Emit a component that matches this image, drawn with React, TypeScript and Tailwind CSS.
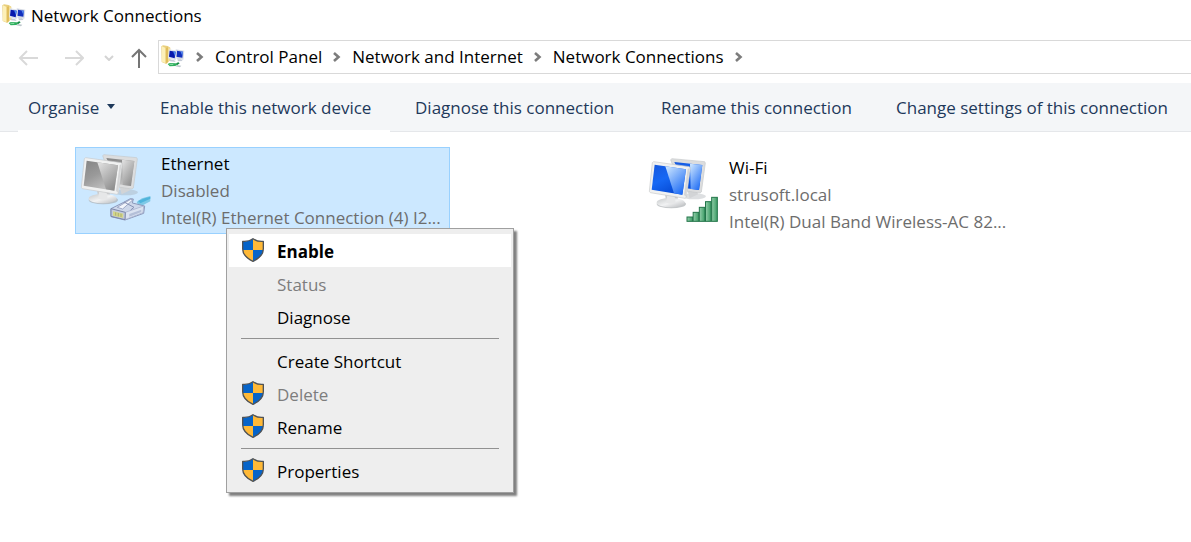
import { Fragment } from 'react'
import clsx from 'clsx'

type MenuEntry = { label: string; shield?: boolean; disabled?: boolean; isDefault?: boolean }

const BREADCRUMBS = ['Control Panel', 'Network and Internet', 'Network Connections']

const COMMANDS = [
    'Enable this network device',
    'Diagnose this connection',
    'Rename this connection',
    'Change settings of this connection',
]

const MENU_GROUPS: MenuEntry[][] = [
    [
        { label: 'Enable', shield: true, isDefault: true },
        { label: 'Status', disabled: true },
        { label: 'Diagnose' },
    ],
    [
        { label: 'Create Shortcut' },
        { label: 'Delete', shield: true, disabled: true },
        { label: 'Rename', shield: true },
    ],
    [{ label: 'Properties', shield: true }],
]

const FolderNetworkIcon = () => (
    <svg viewBox="0 0 72 72" className="size-6 shrink-0" aria-hidden="true">
        <path d="M1 4 6 1l14 2 8 5v36L16 57 2 51Z" fill="#e9cf7c" />
        <path d="M3 4 14 9v46L3 50Z" fill="#fdf0b8" />
        <path d="m14 9 7-2v45l-7 3Z" fill="#e0bd5c" />
        <path d="m21 7 6 2v37l-6 6Z" fill="#f3dc92" />
        <path d="m44 13 26 4-3 27-20-2Z" fill="#d5dae4" />
        <path d="m47 17 19 3-2 18-18-3Z" fill="#1230bd" />
        <path d="m58 19 8 1-2 12Z" fill="#5b8df0" />
        <path d="m24 13 24 4-4 29-23-6Z" fill="#dfe4ee" />
        <path d="m26 17 18 3-3 20-17-5Z" fill="#0719ad" />
        <path d="m36 19 8 1-2 14Z" fill="#4b8bf2" />
        <path d="m26 43 14 3 4 5-17-2Z" fill="#c6ccd8" />
        <path d="M49 43h11l5 5-14 1Z" fill="#c4cad6" />
        <path d="m20 57 6-3 18 1 6 4-7 4-17 1Z" fill="#2fae5e" />
        <path d="m24 56 14 1-3 3-9-1Z" fill="#8bdda5" />
        <path d="m45 55 7-3 4 3-7 5Z" fill="#128a40" />
        <path d="m47 60 14 2-4 5-14-3Z" fill="#bcc6cb" />
    </svg>
)

const ShieldIcon = () => (
    <svg viewBox="0 0 66 72" className="h-6 w-[22px]" aria-hidden="true">
        <path d="M33 2C25 8 12 11 2 10v22c0 17 14 30 31 38Z" fill="#0664c9" />
        <path d="M33 2c8 6 21 9 31 8v22c0 17-14 30-31 38Z" fill="#ffb937" />
        <path d="M33 36h31c-1 16-15 27-31 34Z" fill="#0664c9" />
        <path d="M33 36H2c1 16 15 27 31 34Z" fill="#ffb937" />
        <path
            d="M33 2C25 8 12 11 2 10v22c0 17 14 30 31 38 17-8 31-21 31-38V10C54 11 41 8 33 2Z"
            fill="none"
            stroke="#505356"
            strokeWidth="4"
            strokeLinejoin="round"
        />
    </svg>
)

const EthernetPlug = () => (
    <g strokeLinejoin="round">
        <path d="m170 150 16-11 25-7v16l-34 18Z" fill="#7fc9e6" />
        <path d="m174 147 20-8 17-5v6l-30 14Z" fill="#4fb4dc" />
        <path d="m93 170 36-18 22-12 9 1-3 12 37 9-3 22-56 20-42-10Z" fill="#cdd7ea" stroke="#8d99bb" strokeWidth="3" />
        <path d="m136 181 55-19-2 20-54 21Z" fill="#dbe3f1" stroke="#a0abc9" strokeWidth="2" />
        <path d="m93 170 43 11-1 22-42-10Z" fill="#c3cadb" stroke="#7b86a8" strokeWidth="3" />
        <path d="m99 178 31 7-1 13-30-7Z" fill="#d3d689" />
        <path d="M107 181v10m8-8v10m8-8v10" stroke="#9b9c68" strokeWidth="2" />
        <path d="m112 166 40-24 6 2-30 27Z" fill="#f3f6fc" stroke="#7f8bb0" strokeWidth="2" />
        <path d="m132 150 30 16-10 8" fill="none" stroke="#8792b5" strokeWidth="3" />
        <path d="m148 186 36-13v7l-36 14Z" fill="#b4bfd8" />
    </g>
)

const SignalBars = () => (
    <g stroke="#23754a" strokeWidth="3">
        {[183, 169, 154, 137, 124].map((top, i) => (
            <rect key={top} x={117 + i * 18.5} y={top} width="17" height={196 - top} fill="url(#bar)" />
        ))}
    </g>
)

const ComputersIcon = ({ enabled }: { enabled: boolean }) => {
    const id = enabled ? 'on' : 'off'
    return (
        <svg viewBox="0 0 216 216" className="size-[72px] shrink-0" aria-hidden="true">
            <defs>
                <linearGradient id={`screen-${id}`} x1="0" y1="0" x2="0.6" y2="1">
                    <stop offset="0" stopColor={enabled ? '#1557dd' : '#848484'} />
                    <stop offset="0.5" stopColor={enabled ? '#1668f4' : '#9a9a9a'} />
                    <stop offset="1" stopColor={enabled ? '#0548d2' : '#c4c4c4'} />
                </linearGradient>
                <linearGradient id={`glare-${id}`} x1="0" y1="0" x2="0.7" y2="1">
                    <stop offset="0" stopColor={enabled ? '#d3eaff' : '#e4e4e4'} />
                    <stop offset="1" stopColor={enabled ? '#226ff5' : '#8e8e8e'} />
                </linearGradient>
                <linearGradient id={`base-${id}`} x1="0" y1="0" x2="1" y2="1">
                    <stop offset="0" stopColor="#c6c8ca" />
                    <stop offset="0.5" stopColor="#f1f2f3" />
                    <stop offset="1" stopColor="#b8babd" />
                </linearGradient>
                <linearGradient id="bar" x1="0" y1="0" x2="1" y2="0">
                    <stop offset="0" stopColor="#93cfaa" />
                    <stop offset="1" stopColor="#3b9b64" />
                </linearGradient>
            </defs>
            <ellipse cx="138" cy="121" rx="36" ry="9" fill="#9ea3a8" opacity="0.35" />
            <path d="m119 105 27-3 4 13-25 12Z" fill="#d2d4d6" />
            <path d="m68 11 4-3 98 9 2 4-12 87-4 3-55-8Z" fill="#dcddde" stroke="#c6c8ca" strokeWidth="2" />
            <path d="m79 18 84 9-10 75-38-5Z" fill={`url(#screen-${id})`} />
            <path d="m126 23 37 4-10 75-25-3Z" fill={`url(#glare-${id})`} />
            <path d="M50 109h41l-3 29H55Z" fill="#c8cacc" />
            <ellipse cx="70" cy="144" rx="44" ry="13" fill="#adb0b3" opacity="0.7" />
            <ellipse cx="68" cy="140" rx="42" ry="14" fill={`url(#base-${id})`} />
            <path d="m57 118 23 3 3 19c-9 4-20 4-28 0Z" fill="#e6e7e8" />
            <path d="m13 20 4-3 107 15 3 4-12 88-4 3L7 110l-3-4Z" fill="#f0f1f1" stroke="#c8cacc" strokeWidth="2" />
            <path d="m20 26 94 14-11 76-92-15Z" fill={`url(#screen-${id})`} />
            <path d="m52 31 62 9-11 76-25-4Z" fill={`url(#glare-${id})`} />
            <path d="m119 39 6-3-11 86-6-5Z" fill="#d4d5d6" />
            {enabled ? <SignalBars /> : <EthernetPlug />}
        </svg>
    )
}

const Chevron = () => (
    <svg viewBox="0 0 8 10" className="h-[10px] w-2 shrink-0" aria-hidden="true">
        <path d="m1 1 4.5 4L1 9" fill="none" stroke="#7c7c7c" strokeWidth="2.6" />
    </svg>
)

const NavButtons = () => (
    <div className="flex shrink-0 items-center">
        <button aria-label="Back" disabled className="ml-[18px]">
            <svg viewBox="0 0 20 20" className="size-5" fill="none" stroke="#d9d9d9" strokeWidth="2">
                <path d="M20 10H2m7-7-7 7 7 7" />
            </svg>
        </button>
        <button aria-label="Forward" disabled className="ml-[26px]">
            <svg viewBox="0 0 20 20" className="size-5" fill="none" stroke="#d9d9d9" strokeWidth="2">
                <path d="M1 10h18m-7-7 7 7-7 7" />
            </svg>
        </button>
        <button aria-label="Recent locations" disabled className="ml-5">
            <svg viewBox="0 0 10 6" className="h-[6px] w-[10px]" fill="none" stroke="#d4d4d4" strokeWidth="2">
                <path d="m1 1 4 4 4-4" />
            </svg>
        </button>
        <button aria-label="Up" className="ml-4">
            <svg viewBox="0 0 18 20" className="h-5 w-[18px]" fill="none" stroke="#757575" strokeWidth="2">
                <path d="M9 20V2M2 9l7-7 7 7" />
            </svg>
        </button>
    </div>
)

const ConnectionTile = ({
    name,
    status,
    device,
    enabled,
    selected,
}: {
    name: string
    status: string
    device: string
    enabled: boolean
    selected?: boolean
}) => (
    <button
        className={clsx(
            'flex h-[87px] w-[375px] items-start border pt-1 pl-1 text-left',
            selected ? 'border-[#99d1ff] bg-[#cce8ff]' : 'mt-1 border-transparent'
        )}
    >
        <ComputersIcon enabled={enabled} />
        <span className="-mt-px ml-[9px] block leading-[27px] whitespace-nowrap text-[#6d6d6d]">
            <span className="-mt-px block text-black">{name}</span>
            <span className="block">{status}</span>
            <span className="block">{device}</span>
        </span>
    </button>
)

const ContextMenu = () => (
    <div
        role="menu"
        className="absolute top-24 left-[226px] w-72 border border-[#a0a0a0] bg-[#eeeeee] px-[2px] py-[5px] shadow-[3px_3px_2px_#808080]"
    >
        {MENU_GROUPS.map((group, i) => (
            <Fragment key={group[0].label}>
                {i > 0 && <hr className="mx-3 my-[5px] border-[#919191]" />}
                {group.map((item) => (
                    <button
                        key={item.label}
                        role="menuitem"
                        disabled={item.disabled}
                        className={clsx(
                            'flex h-[33px] w-full items-center pt-[2px] pl-[13px] text-left',
                            item.isDefault && 'bg-white font-bold',
                            item.disabled ? 'text-[#7d7d7d]' : 'text-black'
                        )}
                    >
                        <span className="-mt-1 w-[35px]">{item.shield && <ShieldIcon />}</span>
                        {item.label}
                    </button>
                ))}
            </Fragment>
        ))}
    </div>
)

export default function App() {
    return (
        <div className="min-h-screen overflow-hidden bg-white font-['Open_Sans',sans-serif] text-[17px] text-black">
            <header className="flex h-8 items-center pl-[2px]">
                <FolderNetworkIcon />
                <h1 className="ml-[5px]">Network Connections</h1>
            </header>

            <div className="flex h-[51px] items-center">
                <NavButtons />
                <nav className="mt-[-2px] ml-[10px] flex h-[34px] flex-1 items-center border border-r-0 border-[#d9d9d9] pl-[2px] whitespace-nowrap">
                    <FolderNetworkIcon />
                    <span className="ml-[11px] flex items-center gap-[11px] pt-px">
                        <Chevron />
                        {BREADCRUMBS.map((crumb) => (
                            <Fragment key={crumb}>
                                <a href="#">{crumb}</a>
                                <Chevron />
                            </Fragment>
                        ))}
                    </span>
                </nav>
            </div>

            <div className="relative grid h-[49px] grid-cols-[132px_255px_246px_235px_auto] items-center border-b border-[#e5e7ea] bg-[#f4f6f8] pt-[2px] pl-7 text-[#1e395b]">
                <button className="flex items-center gap-2">
                    Organise
                    <svg viewBox="0 0 8 5" className="-mt-1 h-[5px] w-2" aria-hidden="true">
                        <path d="M0 0h8L4 5Z" fill="#1e395b" />
                    </svg>
                </button>
                {COMMANDS.map((command) => (
                    <button key={command} className="text-left whitespace-nowrap">
                        {command}
                    </button>
                ))}
                <span className="absolute -bottom-px left-[18px] h-[2px] w-[372px] bg-white" />
            </div>

            <main className="relative flex gap-[193px] pt-[15px] pl-[75px]">
                <ConnectionTile
                    name="Ethernet"
                    status="Disabled"
                    device="Intel(R) Ethernet Connection (4) I2..."
                    enabled={false}
                    selected
                />
                <ConnectionTile
                    name="Wi-Fi"
                    status="strusoft.local"
                    device="Intel(R) Dual Band Wireless-AC 82..."
                    enabled
                />
                <ContextMenu />
            </main>
        </div>
    )
}
